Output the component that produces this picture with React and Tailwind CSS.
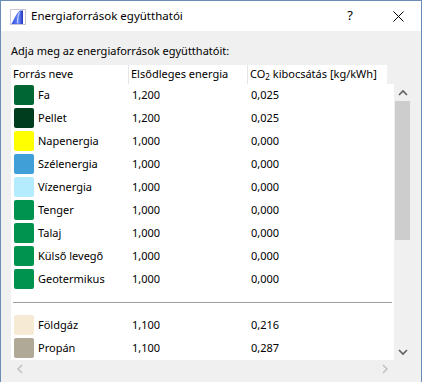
const rows = [
  { name: "Fa", color: "bg-[#006633]", energy: "1,200", co2: "0,025" },
  { name: "Pellet", color: "bg-[#003d1f]", energy: "1,200", co2: "0,025" },
  { name: "Napenergia", color: "bg-[#ffff00]", energy: "1,000", co2: "0,000" },
  { name: "Szélenergia", color: "bg-[#409fd6]", energy: "1,000", co2: "0,000" },
  { name: "Vízenergia", color: "bg-[#b5ecfd]", energy: "1,000", co2: "0,000" },
  { name: "Tenger", color: "bg-[#009350]", energy: "1,000", co2: "0,000" },
  { name: "Talaj", color: "bg-[#009350]", energy: "1,000", co2: "0,000" },
  { name: "Külső levegő", color: "bg-[#009350]", energy: "1,000", co2: "0,000" },
  { name: "Geotermikus", color: "bg-[#009350]", energy: "1,000", co2: "0,000" },
];

const fossil = [
  { name: "Földgáz", color: "bg-[#f6ead4]", energy: "1,100", co2: "0,216" },
  { name: "Propán", color: "bg-[#b1a998]", energy: "1,100", co2: "0,287" },
];

function Row({ item }) {
  return (
    <div className="h-[23px] flex items-start">
      <div className={`ml-[3px] mt-[1px] w-[20px] h-[20px] rounded-[2px] ${item.color}`} />
      <div className="ml-[4px] w-[94px] h-[22px] flex items-center">{item.name}</div>
      <div className="w-[119px] h-[22px] flex items-center">{item.energy}</div>
      <div className="h-[22px] flex items-center">{item.co2}</div>
    </div>
  );
}

function AppIcon() {
  return (
    <svg width="16" height="16" viewBox="0 0 16 16">
      <defs>
        <linearGradient id="g" x1="0" y1="0" x2="1" y2="0">
          <stop offset="0" stopColor="#2746d8" />
          <stop offset="0.6" stopColor="#6f8cff" />
          <stop offset="1" stopColor="#1f34b8" />
        </linearGradient>
      </defs>
      <rect x="0.5" y="0.5" width="15" height="15" fill="#fff" stroke="#c8c8d8" />
      <path d="M1.5 15 C4 11 7 2 10.5 1.5 L13 1.5 L13 15 Z" fill="url(#g)" />
      <path d="M9.5 3 C8 6 7.5 10 7.5 14" stroke="#dfe6ff" strokeWidth="0.8" fill="none" />
    </svg>
  );
}

export default function App() {
  return (
    <div
      className="w-[422px] h-[382px] bg-[#f0f0f0] border-x border-t border-[#6b8db5] flex flex-col overflow-hidden text-[11px] text-black"
      style={{ fontFamily: '"Noto Sans", sans-serif' }}
    >
      {/* Title bar */}
      <div className="h-[30px] bg-white flex items-center shrink-0">
        <div className="ml-[9px] mt-[1px]">
          <AppIcon />
        </div>
        <span className="ml-[5px] text-[11.5px]">Energiaforrások együtthatói</span>
        <span className="ml-auto mr-[40px] text-[13px]">?</span>
        <svg className="mr-[17px]" width="11" height="11" viewBox="0 0 11 11">
          <path d="M0.5 0.5 L10.5 10.5 M10.5 0.5 L0.5 10.5" stroke="#000" strokeWidth="1" />
        </svg>
      </div>

      {/* Body */}
      <div className="px-[10px] flex flex-col flex-1">
        <div className="h-[34px] pt-[11px] leading-[18px]">Adja meg az energiaforrások együtthatóit:</div>

        <div className="flex flex-1">
          <div className="w-[384px] flex flex-col">
            {/* Header */}
            <div className="h-[19px] w-[376px] bg-white flex items-center whitespace-nowrap">
              <div className="w-[118px] h-full pl-[2px] flex items-center border-r border-[#e5e5e5]">Forrás neve</div>
              <div className="w-[119px] h-full pl-[2px] flex items-center border-r border-[#e5e5e5]">Elsődleges energia</div>
              <div className="h-full pl-[2px] flex items-center">
                <span>CO</span>
                <span className="text-[8px] mt-[5px]">2</span>
                <span>&nbsp;kibocsátás [kg/kWh]</span>
              </div>
            </div>

            {/* List */}
            <div className="h-[276px] bg-white flex flex-col">
              {rows.map((r) => (
                <Row key={r.name} item={r} />
              ))}
              <div className="h-[23px] flex items-center pl-[2px] pr-[2px]">
                <div className="w-full h-px bg-[#a0a0a0]" />
              </div>
              {fossil.map((r) => (
                <Row key={r.name} item={r} />
              ))}
            </div>

            {/* Horizontal scrollbar */}
            <div className="h-[17px] bg-[#f0f0f0] flex items-center justify-between px-[5px]">
              <svg width="8" height="10" viewBox="0 0 8 10">
                <path d="M6 1 L2 5 L6 9" stroke="#c2c2c2" strokeWidth="1.6" fill="none" />
              </svg>
              <svg width="8" height="10" viewBox="0 0 8 10">
                <path d="M2 1 L6 5 L2 9" stroke="#c2c2c2" strokeWidth="1.6" fill="none" />
              </svg>
            </div>
          </div>

          {/* Vertical scrollbar */}
          <div className="w-[17px] flex flex-col pt-[19px]">
            <div className="h-[17px] flex items-center justify-center">
              <svg width="10" height="8" viewBox="0 0 10 8">
                <path d="M1 6 L5 2 L9 6" stroke="#606060" strokeWidth="1.6" fill="none" />
              </svg>
            </div>
            <div className="h-[242px] px-[1px]">
              <div className="h-[139px] bg-[#cdcdcd]" />
            </div>
            <div className="h-[17px] flex items-center justify-center">
              <svg width="10" height="8" viewBox="0 0 10 8">
                <path d="M1 2 L5 6 L9 2" stroke="#606060" strokeWidth="1.6" fill="none" />
              </svg>
            </div>
          </div>
        </div>
      </div>
    </div>
  );
}
